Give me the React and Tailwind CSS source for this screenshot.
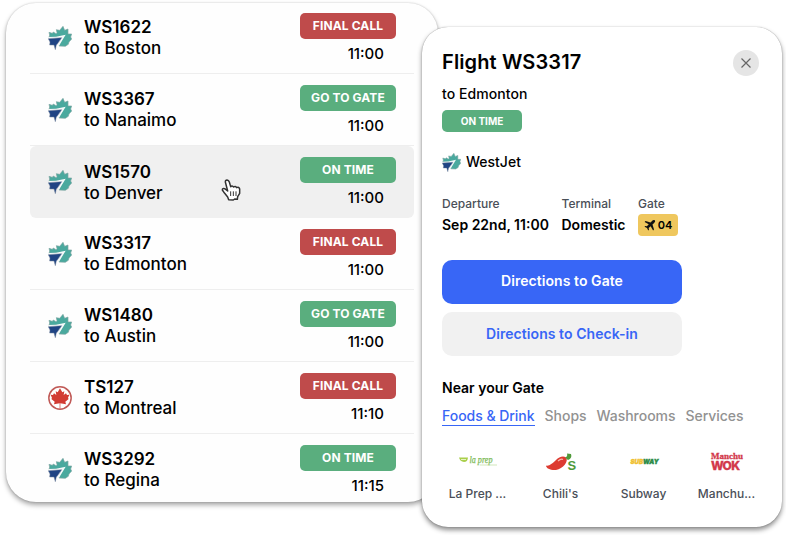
import clsx from "clsx";

const flights = [
  { code: "WS1622", city: "Boston", status: "FINAL CALL", time: "11:00" },
  { code: "WS3367", city: "Nanaimo", status: "GO TO GATE", time: "11:00" },
  { code: "WS1570", city: "Denver", status: "ON TIME", time: "11:00", hovered: true },
  { code: "WS3317", city: "Edmonton", status: "FINAL CALL", time: "11:00" },
  { code: "WS1480", city: "Austin", status: "GO TO GATE", time: "11:00" },
  { code: "TS127", city: "Montreal", status: "FINAL CALL", time: "11:10", airline: "canada" },
  { code: "WS3292", city: "Regina", status: "ON TIME", time: "11:15" },
];

const tabs = ["Foods & Drink", "Shops", "Washrooms", "Services"];

function WestJetLogo({ className }) {
  return (
    <svg className={className} viewBox="0 0 72 72">
      <path
        fill="#4aa99e"
        stroke="#7fa5a2"
        strokeWidth="2"
        strokeLinejoin="round"
        d="M3 34 L5 27 L3 19 L13 22 L16 18 L24 23 L27 20 L25 11 L35 13 L45 1 L50 13 L60 9 L60 24 L71 24 L68 33 L71 39 L63 48 L61 55 L52 61 L33 60 L40 34 Z"
      />
      <path fill="#f4fafa" d="M2 33 L24 32 L53 26 L33 59 L29 58 L40 37 L2 38 Z" />
      <path
        fill="#1f4484"
        stroke="#76849a"
        strokeWidth="1.5"
        strokeLinejoin="round"
        d="M1 38 L41 35 L28 54 L25 57 L22 71 L18 57 L5 57 L6 48 Z"
      />
    </svg>
  );
}

function AirCanadaLogo({ className }) {
  return (
    <svg className={className} viewBox="0 0 72 72">
      <circle cx="36" cy="36" r="33.5" fill="none" stroke="#c05a57" strokeWidth="4.5" />
      <path
        fill="#d23b33"
        d="M36 7 L43 19 L49 16 L47 27 L54 22 L57 27 L64 26 L60 36 L62 39 L52 47 L54 55 L37 52 L37 68 L35 68 L35 52 L18 55 L20 47 L10 39 L12 36 L8 26 L15 27 L18 22 L25 27 L23 16 L29 19 Z"
      />
    </svg>
  );
}

function HandCursor() {
  return (
    <svg className="absolute left-[191px] top-[33px] h-[22px] w-5" viewBox="0 0 60 66">
      <path
        fill="#fff"
        stroke="#333"
        strokeWidth="4.5"
        strokeLinejoin="round"
        d="M20 36 L13 9 Q13 3 18 3 Q23 4 25 9 L29 23 Q33 18 38 24 Q43 20 47 26 Q54 23 56 30 L56 43 L50 53 L49 61 L41 60 L37 63 L23 62 L20 54 L11 43 L4 33 Q4 27 11 29 Z"
      />
      <path stroke="#333" strokeWidth="3" d="M29 37 V51 M37 37 V51 M45 37 V51" />
    </svg>
  );
}

function StatusBadge({ status, className }) {
  return (
    <span
      className={clsx(
        "flex items-center justify-center rounded-[5px] font-bold text-white",
        status === "FINAL CALL" ? "bg-[#bf4b4b]" : "bg-[#5aae7e]",
        className
      )}
    >
      {status}
    </span>
  );
}

function FlightRow({ flight }) {
  const Logo = flight.airline === "canada" ? AirCanadaLogo : WestJetLogo;
  return (
    <li
      className={clsx(
        "relative flex h-[72px] border-b px-[18px]",
        flight.hovered ? "rounded-md border-transparent bg-[#f0f0f0]" : "border-[#eeeeee]"
      )}
    >
      <Logo className="mt-6 h-6 w-6 shrink-0" />
      <div className={clsx("ml-3 text-[17px] leading-[21px] text-black", flight.hovered ? "mt-4" : "mt-[15px]")}>
        <p className="font-semibold">{flight.code}</p>
        <p className="font-medium">to {flight.city}</p>
      </div>
      <div className="ml-auto mt-[11px] flex flex-col items-end">
        <StatusBadge status={flight.status} className="h-[26px] w-24 text-[12px] tracking-[0.12px]" />
        <span className="mr-3 mt-[5px] text-[15px] font-medium leading-5">{flight.time}</span>
      </div>
      {flight.hovered && <HandCursor />}
    </li>
  );
}

function LaPrepLogo() {
  return (
    <svg className="h-6 w-10" viewBox="0 0 40 24">
      <path d="M1 7.500 H10 Q9.500 12 6 12 Q2 11.500 1 7.500Z" fill="#a9cf4b" />
      <path d="M3 9.500 H8" stroke="#e8f2c4" />
      <text
        x="11.500"
        y="12.500"
        fontSize="9.500"
        fontStyle="italic"
        fontFamily="Liberation Serif, serif"
        fill="#7dba58"
        stroke="#7dba58"
        strokeWidth="0.250"
        textLength="23"
        lengthAdjust="spacingAndGlyphs"
      >
        la prep
      </text>
      <path d="M22 15 H39" stroke="#bddc9e" strokeWidth="0.700" />
    </svg>
  );
}

function ChilisLogo() {
  return (
    <svg className="h-6 w-10" viewBox="0 0 40 24">
      <path
        d="M5 15.500 C8 16.500 12 13 15 10 C18 7 22 5.500 25 7.500 C28 11 22 19 15 20 C10 20.500 5 18.500 5 15.500Z"
        fill="#dd3b31"
      />
      <path d="M17 11 Q20 8.500 22 9.500" stroke="#f6b9ae" strokeWidth="1.200" fill="none" />
      <path d="M24 7.500 Q27 6.500 26 3.500 L30 4 Q31.500 8 27 10Z" fill="#4f9a3a" />
      <text x="26.500" y="20" fontSize="13" fontWeight="700" fontFamily="Liberation Sans, sans-serif" fill="#4f9a3a">
        S
      </text>
    </svg>
  );
}

function SubwayLogo() {
  return (
    <svg className="h-6 w-10" viewBox="0 0 40 24">
      <g fontSize="6.500" fontWeight="900" fontStyle="italic" fontFamily="Inter, sans-serif" strokeWidth="0.400">
        <text x="6.500" y="13.500" fill="#f0c02f" stroke="#f0c02f" textLength="12.500" lengthAdjust="spacingAndGlyphs">SUB</text>
        <text x="19" y="13.500" fill="#2a8a45" stroke="#2a8a45" textLength="15.500" lengthAdjust="spacingAndGlyphs">WAY</text>
      </g>
    </svg>
  );
}

function ManchuLogo() {
  return (
    <svg className="h-6 w-10" viewBox="0 0 40 24">
      <text fill="#d2384a" stroke="#d2384a" strokeWidth="0.300">
        <tspan x="4" y="9" fontSize="9" fontWeight="700" fontFamily="Liberation Serif, serif">
          Manchu
        </tspan>
        <tspan x="4" y="20" fontSize="12" fontWeight="800" fontFamily="Inter, sans-serif" letterSpacing="-0.700">
          WOK
        </tspan>
      </text>
    </svg>
  );
}

const places = [
  { name: "La Prep ...", Logo: LaPrepLogo },
  { name: "Chili's", Logo: ChilisLogo },
  { name: "Subway", Logo: SubwayLogo },
  { name: "Manchu...", Logo: ManchuLogo },
];

function PlaneIcon() {
  return (
    <svg className="h-3 w-3" viewBox="0 0 24 24" fill="#111">
      <path d="M21.500 2.500 C20 1 17.500 2 16 3.800 L13.200 7 L3 4 L1.200 5.800 L9.500 10.700 L5.800 14.700 L2.500 14 L1 15.500 L6 18 L8.500 23 L10 21.500 L9.300 18.200 L13.300 14.500 L18.200 22.800 L20 21 L17 10.800 L20.200 8 C22 6.500 23 4 21.500 2.500Z" />
    </svg>
  );
}

function FlightDetails() {
  return (
    <section className="relative z-10 -ml-4 mt-[27px] h-[500px] w-[360px] rounded-[26px] bg-white px-5 shadow-[0_0_1px_rgba(0,0,0,0.45),0_3px_5px_rgba(0,0,0,0.45)]">
      <div className="flex items-start justify-between">
        <h1 className="mt-[22px] text-[20px] font-semibold leading-[26px] tracking-[0.12px]">Flight WS3317</h1>
        <button className="mr-[3px] mt-[23px] flex h-[26px] w-[26px] items-center justify-center rounded-full bg-[#e5e5e5]">
          <svg className="h-[10px] w-[10px]" viewBox="0 0 10 10" stroke="#666" strokeWidth="1.200">
            <path d="M0.500 0.500 L9.500 9.500 M9.500 0.500 L0.500 9.500" />
          </svg>
        </button>
      </div>
      <p className="mt-[8px] text-[14px] font-medium leading-5 tracking-[0.08px]">to Edmonton</p>
      <StatusBadge status="ON TIME" className="mt-[6px] h-[22px] w-20 text-[10px]" />
      <div className="mt-5 flex items-center gap-[5px]">
        <WestJetLogo className="h-[19px] w-[19px]" />
        <span className="text-[14px] font-medium leading-5">WestJet</span>
      </div>

      <dl className="mt-6 flex text-[12px] leading-4">
        <div className="w-[119.500px]">
          <dt className="font-medium text-[#4a4f58]">Departure</dt>
          <dd className="mt-[3px] text-[14px] font-semibold leading-5">Sep 22nd, 11:00</dd>
        </div>
        <div className="w-[76.500px]">
          <dt className="font-medium text-[#4a4f58]">Terminal</dt>
          <dd className="mt-[3px] text-[14px] font-semibold leading-5">Domestic</dd>
        </div>
        <div>
          <dt className="font-medium text-[#4a4f58]">Gate</dt>
          <dd className="mt-[2px] flex h-[22px] w-10 items-center justify-center gap-[2px] rounded bg-[#efc75e] text-[11px] font-semibold">
            <PlaneIcon />
            04
          </dd>
        </div>
      </dl>

      <button className="mt-[23.500px] block h-11 w-60 rounded-[10px] bg-[#3866f6] pb-[2px] text-[14px] font-semibold tracking-[0.06px] text-white">
        Directions to Gate
      </button>
      <button className="mt-2 block h-11 w-60 rounded-[10px] bg-[#f1f1f1] pb-px text-[14px] font-semibold tracking-[0.06px] text-[#3866f6]">
        Directions to Check-in
      </button>

      <h2 className="mt-[22.500px] text-[14px] font-semibold leading-5">Near your Gate</h2>
      <nav className="mt-[8px] flex gap-[10px] whitespace-nowrap text-[14px] font-medium leading-5 tracking-[-0.03px]">
        {tabs.map((tab, i) => (
          <span key={tab} className={clsx("h-5", i === 0 ? "border-b border-[#3866f6] text-[#3866f6]" : "text-[#929292]")}>
            {tab}
          </span>
        ))}
      </nav>

      <ul className="-ml-[6px] mt-6 flex w-[332px]">
        {places.map(({ name, Logo }) => (
          <li key={name} className="flex w-[83px] flex-col items-center">
            <Logo />
            <span className="mt-3 whitespace-nowrap text-[12px] font-medium leading-4 text-[#4a4f58]">{name}</span>
          </li>
        ))}
      </ul>
    </section>
  );
}

export default function App() {
  return (
    <main className="flex h-[535px] w-[786px] items-start overflow-hidden bg-white font-[Inter,sans-serif] text-black">
      <section className="ml-[6px] mt-[3px] h-[499px] w-[432px] shrink-0 overflow-hidden rounded-[30px] bg-[#fefefe] px-6 shadow-[0_0_2px_rgba(0,0,0,0.2),0_3px_5px_rgba(0,0,0,0.35)]">
        <ul className="-mt-px w-[384px] [&>li:last-child]:border-transparent">
          {flights.map((flight) => (
            <FlightRow key={flight.code} flight={flight} />
          ))}
        </ul>
      </section>
      <FlightDetails />
    </main>
  );
}
